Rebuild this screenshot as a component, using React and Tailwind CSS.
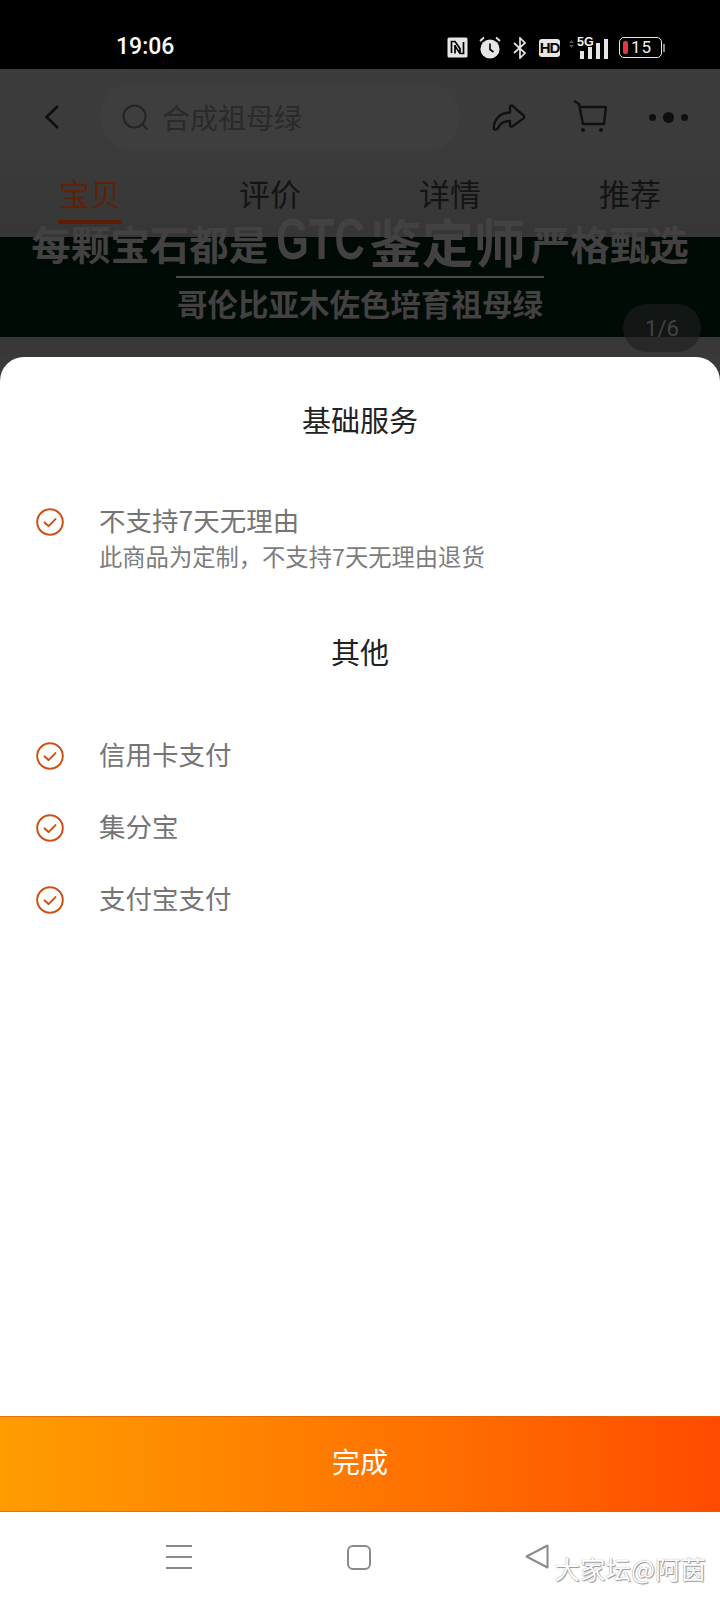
const CJK = { fontFamily: '"Noto Sans CJK SC","Noto Sans",sans-serif' };

function Check() {
  return (
    <svg width="28" height="28" viewBox="0 0 28 28" fill="none" stroke="#cf4f14" strokeWidth="2" className="shrink-0">
      <circle cx="14" cy="14" r="12.8" />
      <path d="M8.6 14.4l3.9 3.7 7-7" strokeLinecap="round" strokeLinejoin="round" />
    </svg>
  );
}

function StatusIcons() {
  return (
    <div className="flex items-center">
      <svg width="21" height="21" viewBox="0 0 21 21" className="mr-[11px]">
        <rect x="0.5" y="0.5" width="20" height="20" rx="1.5" fill="#e6e6e6" />
        <path d="M4.5 16V4.5h3.5l5 7V16M8 8v8.500M16.500 5v11.500h-3.500L8 9" fill="none" stroke="#000" strokeWidth="1.7" />
      </svg>
      <svg width="22" height="23" viewBox="0 0 22 23" className="mr-[12px]">
        <circle cx="11" cy="13" r="9.6" fill="#e6e6e6" />
        <path d="M11 7.500V13.500L14.500 16" fill="none" stroke="#000" strokeWidth="1.6" />
        <path d="M1 5l4-3.500M21 5l-4-3.500" stroke="#e6e6e6" strokeWidth="1.8" />
      </svg>
      <svg width="14" height="22" viewBox="0 0 14 22" fill="none" stroke="#e6e6e6" strokeWidth="1.7" className="mr-[12px]">
        <path d="M1 6l11 10-5 5V1l5 5L1 16" />
      </svg>
      <div className="w-[21px] h-[18px] rounded-[3px] bg-[#e6e6e6] text-black text-[15px] leading-[18px] font-bold text-center mr-[8px] tracking-[-1px]" style={{ fontFamily: '"Liberation Sans",sans-serif' }}>HD</div>
      <div className="relative w-[40px] h-[23px] mr-[11px]">
        <svg width="40" height="23" viewBox="0 0 40 23" fill="#e6e6e6" className="absolute inset-0">
          <rect x="12" y="15" width="4" height="8" />
          <rect x="20" y="11" width="4" height="12" />
          <rect x="28" y="7" width="4" height="16" />
          <rect x="36" y="3" width="4" height="20" />
          <path d="M1 7l2.500-3 2.500 3zM1 9l2.500 3 2.500-3z" fill="#555" />
        </svg>
        <span className="absolute left-[9px] top-[-0px] text-[#eeeeee] text-[12.500px] leading-[13px] font-bold" style={{ fontFamily: '"Liberation Sans",sans-serif' }}>5G</span>
      </div>
      <div className="relative w-[43px] h-[21px] rounded-[5px] border border-[#e6e6e6] flex items-center">
        <div className="ml-[3px] w-[5px] h-[13px] rounded-[2px] bg-[#e8334a]" />
        <span className="ml-[3px] text-[#eeeeee] text-[17px] leading-none tracking-[1px]" style={{ fontFamily: 'Roboto,sans-serif' }}>15</span>
      </div>
      <div className="ml-[1px] w-[2px] h-[8px] bg-[#888888]" />
    </div>
  );
}

function ServiceRow({ title }) {
  return (
    <div className="flex pl-[36px] items-center gap-[35px] h-[72px]">
      <Check />
      <div className="text-[26.500px] leading-[36px] text-[#757575] -mt-[4px]">{title}</div>
    </div>
  );
}

export default function App() {
  return (
    <div className="w-[720px] h-[1600px] flex flex-col overflow-hidden bg-[#3a3a3a]" style={CJK}>
      <div className="h-[69px] bg-black flex items-end justify-between pb-[6px] pl-[116px] pr-[55px] shrink-0">
        <span className="text-white text-[23px] leading-[32px] font-medium" style={{ fontFamily: 'Roboto,sans-serif' }}>19:06</span>
        <div className="pb-[4px]"><StatusIcons /></div>
      </div>

      <div className="h-[168px] shrink-0 bg-gradient-to-b from-[#3c3c3c] via-[#3b3b3b] to-[#363636]">
        <div className="h-[94px] flex items-center pt-[2px]">
          <svg width="18" height="26" viewBox="0 0 18 26" fill="none" stroke="#0f0f0f" strokeWidth="2.6" className="ml-[43px]">
            <path d="M15 2L3.500 13 15 24" />
          </svg>
          <div className="ml-[39px] w-[360px] h-[68px] rounded-full bg-[#3e3e3e] flex items-center pl-[22px]">
            <svg width="27" height="27" viewBox="0 0 27 27" fill="none" stroke="#242424" strokeWidth="2">
              <circle cx="12.500" cy="12.500" r="11" />
              <path d="M20.500 20.500l5 5" />
            </svg>
            <span className="ml-[13px] text-[28px] text-[#2a2a2a]">合成祖母绿</span>
          </div>
          <svg width="34" height="28" viewBox="0 0 34 28" fill="none" stroke="#111111" strokeWidth="2.4" strokeLinejoin="round" strokeLinecap="round" className="ml-[32px]">
            <path d="M2 26C1 20 5 10 18 9.500V4c0-1.500 1.500-2 2.500-1.200l11 9.700c1 .9 1 2 0 2.900l-11 8c-1 .7-2.500 0-2.500-1.200v-4.200C12 18 8 20 6 25c-.8 1.600-3.500 2.200-4 1z" />
          </svg>
          <svg width="34" height="34" viewBox="0 0 34 34" fill="none" stroke="#111111" strokeWidth="2.4" className="ml-[47px]">
            <path d="M1 1l5 3 4 20h21l2-17H7" strokeLinejoin="round" />
            <circle cx="10" cy="30" r="2" fill="#111111" stroke="none" />
            <circle cx="28" cy="30" r="2" fill="#111111" stroke="none" />
          </svg>
          <div className="ml-[42px] flex items-center gap-[7px]">
            <div className="w-[7px] h-[7px] rounded-full bg-[#0f0f0f]" />
            <div className="w-[11px] h-[11px] rounded-full bg-[#0f0f0f]" />
            <div className="w-[7px] h-[7px] rounded-full bg-[#0f0f0f]" />
          </div>
        </div>
        <div className="grid grid-cols-4 text-center text-[31px] leading-[44px] text-[#141414] mt-[8px]">
          <div className="flex flex-col items-center">
            <span className="text-[#5e2109]">宝贝</span>
            <div className="w-[64px] h-[4px] bg-[#5e1c05] mt-[5px]" />
          </div>
          <span>评价</span>
          <span>详情</span>
          <span>推荐</span>
        </div>
      </div>

      <div className="relative h-[100px] shrink-0 bg-[#010b05] flex flex-col items-center text-[#434141]">
        <div className="-mt-[24px] h-[60px] flex items-center font-bold text-[39.500px] leading-none whitespace-nowrap">
          <span>每颗宝石都是</span>
          <span className="text-[42px] ml-[8px] origin-bottom scale-y-[1.35] translate-y-[4px]" style={{ fontFamily: '"Liberation Sans","Noto Sans CJK SC",sans-serif' }}>GTC</span>
          <span className="text-[52px] ml-[5px] -mt-[4px]">鉴定师</span>
          <span className="ml-[5px]">严格甄选</span>
        </div>
        <div className="w-[368px] h-[2px] bg-[#4a4a4a] mt-[3px]" />
        <div className="text-[30.500px] leading-[46px] font-bold whitespace-nowrap mt-[2px]">哥伦比亚木佐色培育祖母绿</div>
        <div className="absolute right-[19px] top-[67px] w-[78px] h-[48px] rounded-full bg-[#1e1e1e]/60 flex items-center justify-center text-[22px] text-[#424242]" style={{ fontFamily: 'Roboto,sans-serif' }}>1/6</div>
      </div>

      <div className="h-[20px] shrink-0 bg-[#383838]" />

      <div className="flex-1 min-h-0 bg-white rounded-t-[24px] flex flex-col">
        <div className="flex-1 pt-[41px]">
          <div className="text-center text-[29px] leading-[42px] text-[#222222]">基础服务</div>
          <div className="flex pl-[36px] mt-[66px] gap-[35px]">
            <div className="pt-[2px]"><Check /></div>
            <div className="-mt-[4px]">
              <div className="text-[26.500px] leading-[36px] text-[#757575]">不支持7天无理由</div>
              <div className="text-[23.300px] leading-[36px] text-[#7c7c7c]">此商品为定制，不支持7天无理由退货</div>
            </div>
          </div>
          <div className="text-center text-[29px] leading-[42px] text-[#222222] mt-[56px]">其他</div>
          <div className="mt-[48px]">
            <ServiceRow title="信用卡支付" />
            <ServiceRow title="集分宝" />
            <ServiceRow title="支付宝支付" />
          </div>
        </div>
        <div className="h-[96px] shrink-0 bg-gradient-to-r from-[#ff9c00] to-[#ff4a00] border-y border-[#d9650a]/70 flex items-center justify-center text-white text-[28px] pb-[7px]">完成</div>
        <div className="h-[88px] shrink-0 relative flex items-center pt-[2px]">
          <svg width="26" height="26" viewBox="0 0 26 26" stroke="#8a8a8a" strokeWidth="2" className="ml-[166px]">
            <path d="M0 2h26M0 13h26M0 24h26" />
          </svg>
          <svg width="24" height="25" viewBox="0 0 24 25" fill="none" stroke="#8a8a8a" strokeWidth="2" className="ml-[155px]">
            <rect x="1" y="1" width="22" height="23" rx="5" />
          </svg>
          <svg width="24" height="25" viewBox="0 0 24 25" fill="none" stroke="#8a8a8a" strokeWidth="2" strokeLinejoin="round" className="ml-[154px] -mt-[2px]">
            <path d="M22.500 1.500v22L1.500 12.500z" />
          </svg>
          <div className="absolute right-[14px] top-[40px] text-[25.500px] leading-[32px] text-white whitespace-nowrap [text-shadow:0_0_1px_#777,1px_1px_1px_#999]">大家坛@阿茵</div>
        </div>
      </div>
    </div>
  );
}
